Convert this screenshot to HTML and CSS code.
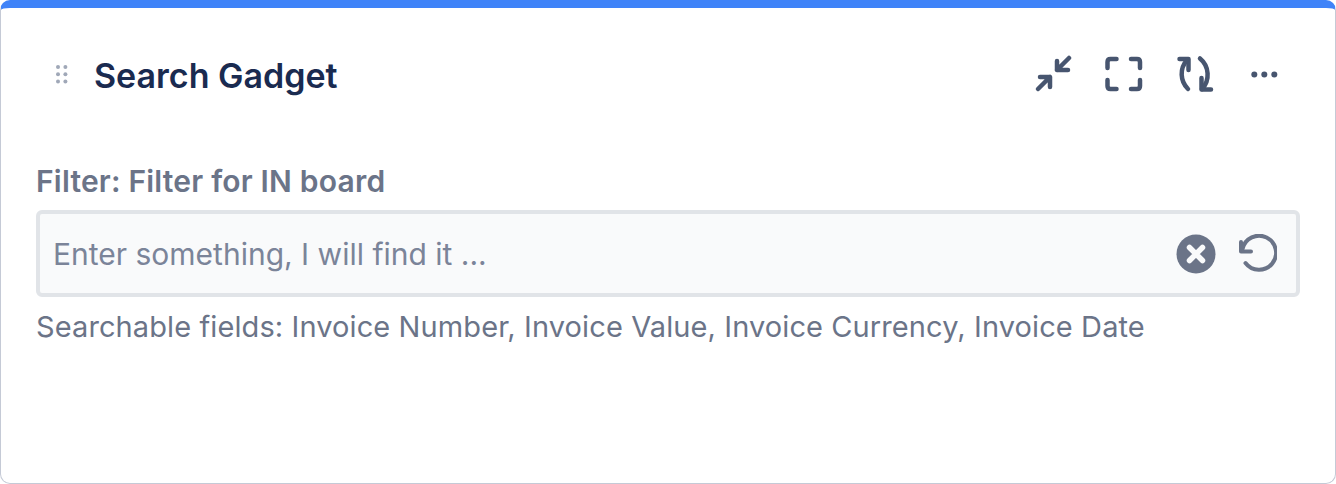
FILE: index.html
```html
<!DOCTYPE html>
<html>

<head>
  <title>Search Gadget</title>
  <link rel="stylesheet" href="styles.css">
</head>
<body>
  <div class="gadget">
    <div class="gadget-header">
      <div class="gadget-title">
        <svg class="drag-handle" width="14" height="20" viewBox="0 0 14 20">
          <circle cx="3" cy="2" r="2"/><circle cx="10.4" cy="2" r="2"/>
          <circle cx="3" cy="9.2" r="2"/><circle cx="10.4" cy="9.2" r="2"/>
          <circle cx="3" cy="16.4" r="2"/><circle cx="10.4" cy="16.4" r="2"/>
        </svg>
        <h1>Search Gadget</h1>
      </div>
      <div class="gadget-actions">
        <svg class="action" width="40" height="40" viewBox="0 0 40 40">
          <path d="M37 4 L25 16 M25 7 V16 H36"/>
          <path d="M6 35 L18 23 M8 23 H18 V33"/>
        </svg>
        <svg class="action" width="40" height="40" viewBox="0 0 40 40">
          <path d="M4.5 14 V8 Q4.5 5 7.5 5 H13.5"/>
          <path d="M28 5 H34 Q37 5 37 8 V14"/>
          <path d="M37 26 V32 Q37 35 34 35 H28"/>
          <path d="M13.5 35 H7.5 Q4.5 35 4.5 32 V26"/>
        </svg>
        <svg class="action" width="40" height="40" viewBox="0 0 40 40">
          <path d="M14.5 16 V5 H5.5"/>
          <path d="M13 6 A21 21 0 0 0 14 35"/>
          <path d="M27.5 24 V35.5 H37"/>
          <path d="M26 4.5 A21 21 0 0 1 28 35"/>
        </svg>
        <svg class="action dots" width="40" height="40" viewBox="0 0 40 40">
          <circle cx="9.3" cy="20.5" r="3"/><circle cx="19.3" cy="20.5" r="3"/><circle cx="29.3" cy="20.5" r="3"/>
        </svg>
      </div>
    </div>

    <label class="filter-label" for="search">Filter: Filter for IN board</label>
    <div class="search-box">
      <input id="search" type="text" placeholder="Enter something, I will find it ...">
      <svg class="clear-icon" width="40" height="40" viewBox="0 0 40 40">
        <circle cx="20" cy="20" r="19.5"/>
        <path d="M13.5 13.5 L26.5 26.5 M26.5 13.5 L13.5 26.5"/>
      </svg>
      <svg class="reset-icon" width="40" height="40" viewBox="0 0 40 40">
        <path d="M4 8 V17.5 H14"/>
        <path d="M5.5 15 A17 17 0 1 1 8.5 29"/>
      </svg>
    </div>
    <p class="search-hint">Searchable fields: Invoice Number, Invoice Value, Invoice Currency, Invoice Date</p>
  </div>
</body>
</html>
```

FILE: styles.css
```css
* {
  box-sizing: border-box;
}
body {
  margin: 0;
  font-family: Inter, "Liberation Sans", sans-serif;
  background-color: #fff;
}
.gadget {
  height: 484px;
  border: 1px solid #c5cad6;
  border-top: 8px solid #3f83f8;
  border-radius: 10px;
  padding: 0 35px;
  background-color: #fff;
}

.gadget-header {
  display: flex;
  justify-content: space-between;
  align-items: center;
  height: 76px;
  margin-top: 29px;
}
.gadget-title {
  display: flex;
  align-items: center;
}
.drag-handle {
  fill: #a0a8b8;
  margin-left: 19px;
  margin-right: 25px;
}
h1 {
  margin: 0;
  font-size: 34px;
  font-weight: 600;
  color: #1a2b50;
}
.gadget-actions {
  display: flex;
  gap: 31px;
  margin-right: 15px;
  margin-bottom: 2px;
}
.action {
  fill: none;
  stroke: #47556f;
  stroke-width: 4.5;
  stroke-linecap: round;
  stroke-linejoin: round;
}
.action.dots {
  fill: #47556f;
  stroke: none;
}

.filter-label {
  display: block;
  margin-top: 50px;
  font-size: 30px;
  line-height: 36px;
  font-weight: 600;
  letter-spacing: 0.2px;
  color: #6b7488;
}
.search-box {
  display: flex;
  align-items: center;
  height: 87px;
  margin-top: 11px;
  border: 4px solid #e1e4e8;
  border-radius: 6px;
  padding: 0 19px 0 13px;
  background-color: #f9fafb;
}
.search-box input {
  flex: 1;
  border: none;
  outline: none;
  padding: 0;
  background: transparent;
  font-family: inherit;
  font-size: 30px;
  color: #6b7488;
}
.search-box input::placeholder {
  color: #7b8499;
  opacity: 1;
}
.clear-icon {
  fill: #6b7488;
  stroke: none;
}
.clear-icon path {
  fill: none;
  stroke: #f9fafb;
  stroke-width: 5.5;
  stroke-linecap: round;
}
.reset-icon {
  margin-left: 21px;
  fill: none;
  stroke: #6b7488;
  stroke-width: 4;
  stroke-linecap: round;
  stroke-linejoin: round;
}
.search-hint {
  margin: 12px 0 0;
  font-size: 29px;
  line-height: 36px;
  letter-spacing: 0.1px;
  color: #6b7488;
}
```
